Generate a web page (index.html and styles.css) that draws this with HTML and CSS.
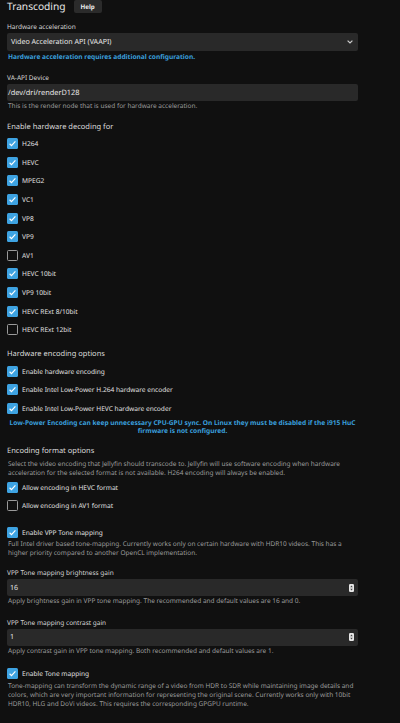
FILE: index.html
```html
<!DOCTYPE html>
<html lang="en">
<head>
  <meta charset="UTF-8">
  <meta name="viewport" content="width=device-width, initial-scale=1.0">
  <title>Transcoding</title>
  <link rel="stylesheet" href="styles.css">
</head>
<body>
  <div class="page">
    <div class="titleRow">
      <h2 class="pageTitle">Transcoding</h2>
      <button class="helpBtn">Help</button>
    </div>

    <!-- hardware acceleration -->
    <label class="fieldLabel lblAccel">Hardware acceleration</label>
    <div class="selectBox">
      <span>Video Acceleration API (VAAPI)</span>
      <svg class="chevron" width="6" height="4" viewBox="0 0 6 4"><path d="M0.6 0.6 L3 3 L5.4 0.6" fill="none" stroke="#ccc" stroke-width="1.2"/></svg>
    </div>
    <div class="blueNote noteAccel">Hardware acceleration requires additional configuration.</div>

    <label class="fieldLabel lblDevice">VA-API Device</label>
    <div class="textBox">/dev/dri/renderD128</div>
    <div class="fieldDesc descDevice">This is the render node that is used for hardware acceleration.</div>

    <!-- decoding -->
    <h3 class="groupTitle gDecode">Enable hardware decoding for</h3>
    <div class="checkList listDecode">
      <div class="chk on"><i class="box"></i>H264</div>
      <div class="chk on"><i class="box"></i>HEVC</div>
      <div class="chk on"><i class="box"></i>MPEG2</div>
      <div class="chk on"><i class="box"></i>VC1</div>
      <div class="chk on"><i class="box"></i>VP8</div>
      <div class="chk on"><i class="box"></i>VP9</div>
      <div class="chk"><i class="box"></i>AV1</div>
      <div class="chk on"><i class="box"></i>HEVC 10bit</div>
      <div class="chk on"><i class="box"></i>VP9 10bit</div>
      <div class="chk on"><i class="box"></i>HEVC RExt 8/10bit</div>
      <div class="chk"><i class="box"></i>HEVC RExt 12bit</div>
    </div>

    <!-- encoding -->
    <h3 class="groupTitle gEncode">Hardware encoding options</h3>
    <div class="checkList listEncode">
      <div class="chk on"><i class="box"></i>Enable hardware encoding</div>
      <div class="chk on"><i class="box"></i>Enable Intel Low-Power H.264 hardware encoder</div>
      <div class="chk on"><i class="box"></i>Enable Intel Low-Power HEVC hardware encoder</div>
    </div>
    <div class="blueNote centered noteLowPower">Low-Power Encoding can keep unnecessary CPU-GPU sync. On Linux they must be disabled if the i915 HuC firmware is not configured.</div>

    <h3 class="groupTitle gFormat">Encoding format options</h3>
    <div class="fieldDesc multi descFormat">Select the video encoding that Jellyfin should transcode to. Jellyfin will use software encoding when hardware acceleration for the selected format is not available. H264 encoding will always be enabled.</div>
    <div class="checkList listFormat">
      <div class="chk on"><i class="box"></i>Allow encoding in HEVC format</div>
      <div class="chk"><i class="box"></i>Allow encoding in AV1 format</div>
    </div>

    <!-- tone mapping -->
    <div class="chk single on chkVpp"><i class="box"></i>Enable VPP Tone mapping</div>
    <div class="fieldDesc multi descVpp">Full Intel driver based tone-mapping. Currently works only on certain hardware with HDR10 videos. This has a higher priority compared to another OpenCL implementation.</div>

    <label class="fieldLabel lblBright">VPP Tone mapping brightness gain</label>
    <div class="numBox"><span>16</span><svg width="5" height="8" viewBox="0 0 5 8"><rect width="5" height="8" rx="1.2" fill="#e6e6e6"/><path d="M1.2 3.2 L2.5 1.6 L3.8 3.2Z M1.2 4.8 L2.5 6.4 L3.8 4.8Z" fill="#444"/></svg></div>
    <div class="fieldDesc descBright">Apply brightness gain in VPP tone mapping. The recommended and default values are 16 and 0.</div>

    <label class="fieldLabel lblContrast">VPP Tone mapping contrast gain</label>
    <div class="numBox"><span>1</span><svg width="5" height="8" viewBox="0 0 5 8"><rect width="5" height="8" rx="1.2" fill="#e6e6e6"/><path d="M1.2 3.2 L2.5 1.6 L3.8 3.2Z M1.2 4.8 L2.5 6.4 L3.8 4.8Z" fill="#444"/></svg></div>
    <div class="fieldDesc descContrast">Apply contrast gain in VPP tone mapping. Both recommended and default values are 1.</div>

    <div class="chk single on chkTone"><i class="box"></i>Enable Tone mapping</div>
    <div class="fieldDesc multi descTone">Tone-mapping can transform the dynamic range of a video from HDR to SDR while maintaining image details and colors, which are very important information for representing the original scene. Currently works only with 10bit HDR10, HLG and DoVi videos. This requires the corresponding GPGPU runtime.</div>
  </div>
</body>
</html>
```

FILE: styles.css
```css
/* dark dashboard page, shown small */
html, body {
  margin: 0; padding: 0;
  background: #101010;
  color: #e0e0e0;
  font-family: "Noto Sans", "Open Sans", sans-serif;
  text-rendering: geometricPrecision;
}
.page { width: 351px; padding-left: 7px; }

/* title */
.titleRow { display: flex; align-items: flex-start; gap: 8px; height: 13px; }
.pageTitle { margin: 0; font-size: 10.2px; font-weight: 400; line-height: 13px; color: #e8e8e8; }
.helpBtn {
  height: 13px; width: 28px; padding: 0; border: none; border-radius: 2px;
  background: #2b2b2b; color: #eee; font: 700 6.2px "Noto Sans", sans-serif;
  text-rendering: geometricPrecision;
}

/* labels & inputs */
.fieldLabel { display: block; font-size: 6.5px; line-height: 10px; color: #d6d6d6; }
.selectBox, .textBox, .numBox {
  display: flex; align-items: center; justify-content: space-between;
  background: #292929; border-radius: 2px; box-sizing: border-box;
  font-size: 7.1px; color: #e8e8e8;
}
.selectBox { height: 18px; padding: 0 5px 0 4px; margin-top: 1px; }
.textBox { height: 17px; padding-left: 1px; margin-top: 1px; font-size: 7.4px; }
.numBox { height: 17px; padding: 0 4px 0 3px; margin-top: 1px; }

.fieldDesc { font-size: 6.5px; line-height: 10px; color: #9c9c9c; padding-left: 1px; }
.fieldDesc.multi { line-height: 9px; }

.blueNote { font-size: 6.6px; font-weight: 700; line-height: 10px; color: #3a9fdc; padding-left: 1px; }
.blueNote.centered { text-align: center; line-height: 8px; padding: 0; }

.groupTitle { margin: 0; font-size: 7.5px; font-weight: 400; line-height: 11px; color: #dcdcdc; }

/* checkboxes */
.chk { display: flex; align-items: center; gap: 4px; height: 18.6px; font-size: 6.6px; color: #e0e0e0; }
.chk.single { height: 11px; }
.box {
  width: 11px; height: 11px; box-sizing: border-box; flex: none;
  border: 1.3px solid #9a9a9a; border-radius: 1.5px;
}
.chk.on .box {
  border: none; background: #3ea3e2;
  background-image: url("data:image/svg+xml,%3Csvg xmlns='http://www.w3.org/2000/svg' viewBox='0 0 11 11'%3E%3Cpath d='M2.6 5.8 L4.5 7.6 L8.4 3.4' fill='none' stroke='white' stroke-width='1.2'/%3E%3C/svg%3E");
}

/* vertical spacing */
.lblAccel { margin-top: 9px; }
.noteAccel { margin-top: 1px; }
.lblDevice { margin-top: 11px; }
.gDecode { margin-top: 10.5px; }
.listDecode { margin-top: 2px; }
.gEncode { margin-top: 9.5px; }
.listEncode { margin-top: 2.4px; }
.noteLowPower { margin-top: 1px; }
.gFormat { margin-top: 11.5px; }
.descFormat { margin-top: 1.6px; }
.listFormat { margin-top: 1px; }
.chkVpp { margin-top: 12.2px; }
.descVpp { margin-top: 1.2px; }
.lblBright { margin-top: 10.8px; }
.lblContrast { margin-top: 11.6px; }
.chkTone { margin-top: 12.7px; }
.descTone { margin-top: 1.9px; }
```
